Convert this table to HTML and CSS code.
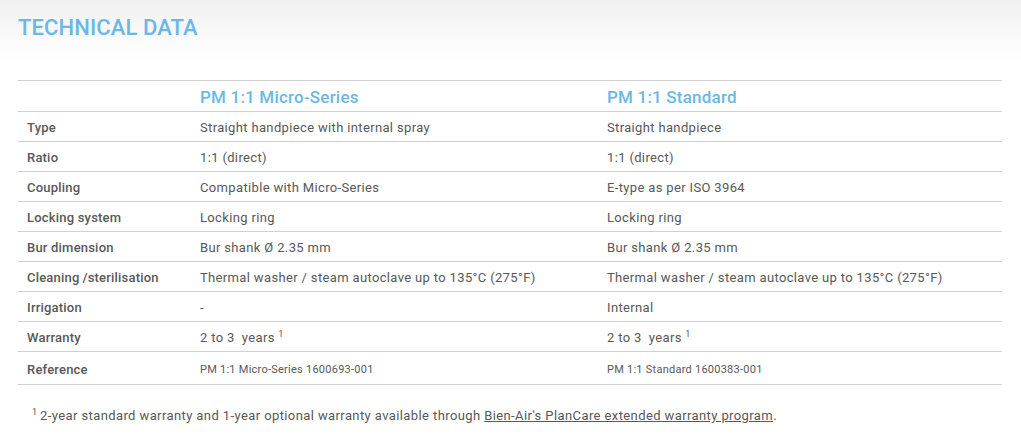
FILE: index.html
```html
<!DOCTYPE html>
<html lang="en">
<head>
<meta charset="utf-8">
<title>Technical data</title>
<link rel="stylesheet" href="styles.css">
</head>
<body>
<section class="tech">
  <h2 class="tech-title">TECHNICAL DATA</h2>
  <table class="spec">
    <colgroup>
      <col class="c-label">
      <col class="c-a">
      <col class="c-b">
    </colgroup>
    <thead>
      <tr>
        <th></th>
        <th class="prod">PM 1:1 Micro-Series</th>
        <th class="prod">PM 1:1 Standard</th>
      </tr>
    </thead>
    <tbody>
      <tr><th>Type</th><td>Straight handpiece with internal spray</td><td>Straight handpiece</td></tr>
      <tr><th>Ratio</th><td>1:1 (direct)</td><td>1:1 (direct)</td></tr>
      <tr><th>Coupling</th><td>Compatible with Micro-Series</td><td>E-type as per ISO 3964</td></tr>
      <tr><th>Locking system</th><td>Locking ring</td><td>Locking ring</td></tr>
      <tr><th>Bur dimension</th><td>Bur shank Ø 2.35 mm</td><td>Bur shank Ø 2.35 mm</td></tr>
      <tr><th>Cleaning&#8201;/sterilisation</th><td>Thermal washer / steam autoclave up to 135°C (275°F)</td><td>Thermal washer / steam autoclave up to 135°C (275°F)</td></tr>
      <tr><th>Irrigation</th><td>-</td><td>Internal</td></tr>
      <tr><th>Warranty</th><td>2 to 3&nbsp; years <sup>1</sup></td><td>2 to 3&nbsp; years <sup>1</sup></td></tr>
      <tr class="ref"><th>Reference</th><td>PM 1:1 Micro-Series 1600693-001</td><td>PM 1:1 Standard 1600383-001</td></tr>
    </tbody>
  </table>
  <p class="note"><sup>1</sup>2-year standard warranty and 1-year optional warranty available through <a href="#">Bien-Air's PlanCare extended warranty program</a>.</p>
</section>
</body>
</html>
```
FILE: styles.css
```css
html, body {
  margin: 0;
  padding: 0;
  background: #fff;
}
body {
  font-family: Roboto, "Liberation Sans", sans-serif;
  color: #585858;
}
.tech {
  background: linear-gradient(to bottom, #f1f1f1 0px, #ffffff 62px);
  padding: 16px 19px 0 18px;
  height: 434px;
  box-sizing: border-box;
}
.tech-title {
  margin: 0;
  font-size: 22px;
  font-weight: 500;
  line-height: 24px;
  color: #6cb8e4;
  letter-spacing: 0.1px;
}
.spec {
  margin-top: 40px;
  width: 984px;
  border-collapse: collapse;
  table-layout: fixed;
  font-size: 13px;
  letter-spacing: 0.35px;
  border-top: 1px solid #d0d0d0;
}
.c-label { width: 173px; }
.c-a { width: 407px; }
.c-b { width: 404px; }
.spec th, .spec td {
  border-bottom: 1px solid #d0d0d0;
  padding: 2px 0 0 9px;
  height: 27px;
  text-align: left;
  vertical-align: middle;
  white-space: nowrap;
}
.spec tbody th {
  font-weight: 500;
  color: #585858;
  letter-spacing: 0.2px;
}
.spec td {
  font-weight: 400;
  color: #585858;
}
.spec thead th {
  height: 28px;
  padding-top: 2px;
}
.spec .prod {
  font-size: 17px;
  font-weight: 500;
  color: #6cb8e4;
  letter-spacing: 0.2px;
}
.spec sup {
  font-size: 9px;
  vertical-align: 5px;
  line-height: 0;
}
.spec .ref th, .spec .ref td {
  height: 30px;
}
.spec .ref td {
  font-size: 11px;
  letter-spacing: 0.25px;
}
.note {
  margin: 23px 0 0 14px;
  font-size: 13px;
  letter-spacing: 0.4px;
  color: #585858;
}
.note sup {
  font-size: 9px;
  vertical-align: 5px;
  line-height: 0;
  letter-spacing: 0;
  margin-right: 3px;
}
.note a {
  color: #585858;
  text-decoration: underline;
}
```
